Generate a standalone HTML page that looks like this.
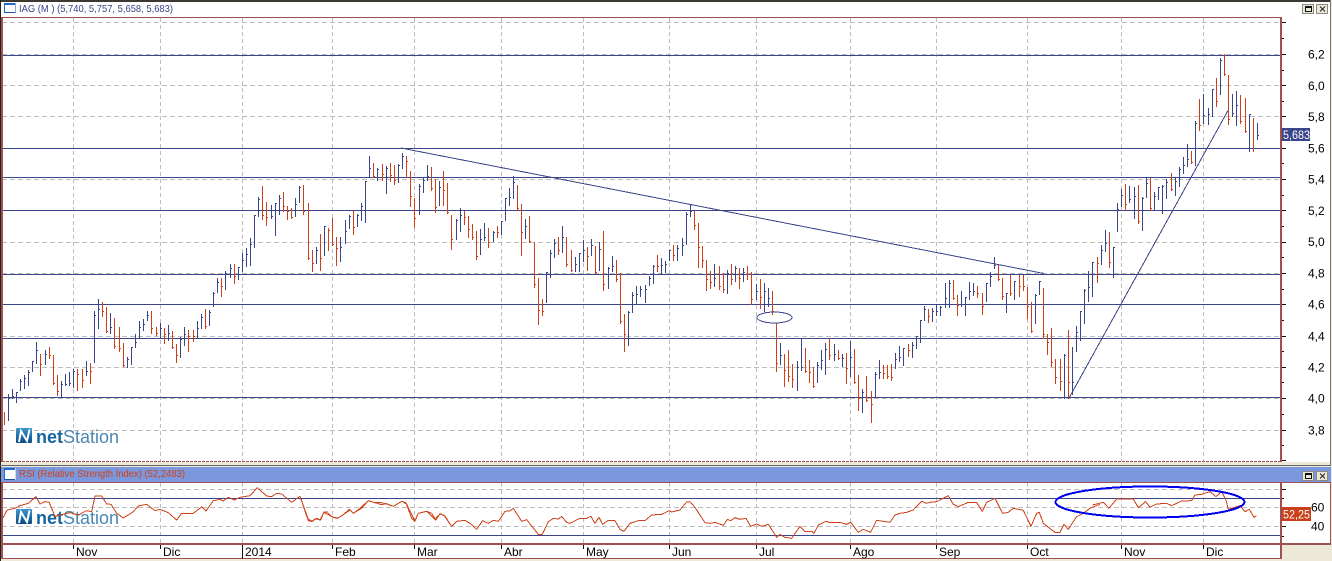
<!DOCTYPE html>
<html><head><meta charset="utf-8"><title>IAG</title>
<style>
html,body{margin:0;padding:0;background:#ECE9D8;width:1332px;height:561px;overflow:hidden}
svg{display:block;position:absolute;left:0;top:0}
text{font-family:"Liberation Sans",Arial,sans-serif}
.a{font-size:12px;fill:#000}
</style></head><body>
<svg width="1332" height="561" viewBox="0 0 1332 561" xmlns="http://www.w3.org/2000/svg">
<defs><linearGradient id="g" x1="0" y1="0" x2="0" y2="1"><stop offset="0" stop-color="#3E97CE"/><stop offset="1" stop-color="#0B4A84"/></linearGradient></defs>
<rect width="1332" height="561" fill="#ECE9D8"/>
<rect x="0" y="0" width="1331" height="2" fill="#3a3a32"/>
<rect x="0" y="2" width="1331" height="15" fill="#fff"/>
<rect x="2" y="17" width="1328" height="445" fill="#fff"/>
<rect x="2" y="482" width="1328" height="62" fill="#fff"/>
<rect x="2" y="545" width="1279" height="14" fill="#fff"/>
<rect x="1330" y="0" width="1" height="466" fill="#777"/>
<!-- rsi band -->
<rect x="0" y="467" width="1331" height="15" fill="#7B97DD"/>
<g shape-rendering="crispEdges">
<!-- grid -->
<path fill="none" stroke="#BDBDBD" stroke-dasharray="5 3" d="M2 22.5H1280M2 54.5H1280M2 85.5H1280M2 116.5H1280M2 148.5H1280M2 179.5H1280M2 210.5H1280M2 242.5H1280M2 273.5H1280M2 304.5H1280M2 336.5H1280M2 367.5H1280M2 398.5H1280M2 430.5H1280M2 489.5H1280M2 507.5H1280M2 526.5H1280"/>
<path fill="none" stroke="#BDBDBD" stroke-dasharray="4 3" d="M73.5 18V461M160.5 18V461M242.5 18V461M332.5 18V461M414.5 18V461M501.5 18V461M583.5 18V461M669.5 18V461M756.5 18V461M850.5 18V461M936.5 18V461M1027.5 18V461M1121.5 18V461M1203.5 18V461M73.5 483V543M160.5 483V543M242.5 483V543M332.5 483V543M414.5 483V543M501.5 483V543M583.5 483V543M669.5 483V543M756.5 483V543M850.5 483V543M936.5 483V543M1027.5 483V543M1121.5 483V543M1203.5 483V543"/>
<!-- horizontals -->
<path fill="none" stroke="#3A4488" d="M2 55.5H1280M2 148.5H1280M2 177.5H1280M2 210.5H1280M2 274.5H1280M2 304.5H1280M2 338.5H1280M2 397.5H1280M2 498.5H1280M2 535.5H1280"/>
</g>
<!-- logos -->
<g>
<rect x="16" y="428" width="16" height="15" rx="1" fill="url(#g)"/><path d="M19 442L21 431L27 441L29.5 429.500" fill="none" stroke="#fff" stroke-width="2"/>
<text x="36" y="443" font-size="18.500" fill="#1565A0" textLength="83" lengthAdjust="spacingAndGlyphs"><tspan font-weight="bold">net</tspan><tspan fill="#4A88B2">Station</tspan></text>
<rect x="16" y="509" width="16" height="15" rx="1" fill="url(#g)"/><path d="M19 523L21 512L27 522L29.5 510.500" fill="none" stroke="#fff" stroke-width="2"/>
<text x="36" y="524" font-size="18.500" fill="#1565A0" textLength="83" lengthAdjust="spacingAndGlyphs"><tspan font-weight="bold">net</tspan><tspan fill="#4A88B2">Station</tspan></text>
</g>
<!-- bars -->
<g fill="none" stroke-width="1" shape-rendering="crispEdges">
<path stroke="#3A4488" d="M8.500 394V421M9 398.500h1M12.500 389V399M13 396.500h1M16.500 392V403M17 392.500h1M20.500 379V391M21 381.500h1M24.500 375V389M25 378.500h1M28.500 370V386M29 372.500h1M32.500 361V372M33 361.500h1M36.500 342V364M37 350.500h1M45.500 350V365M46 354.500h1M61.500 381V397M62 384.500h1M65.500 374V386M66 384.500h1M69.500 372V386M70 383.500h1M73.500 369V388M74 371.500h1M86.500 361V376M87 371.500h1M94.500 311V363M95 315.500h1M98.500 299V329M99 309.500h1M110.500 313V334M111 327.500h1M127.500 357V368M128 359.500h1M131.500 347V365M132 347.500h1M135.500 334V348M136 342.500h1M139.500 321V339M140 327.500h1M143.500 319V331M144 324.500h1M147.500 311V321M148 315.500h1M160.500 323V339M161 328.500h1M168.500 325V341M169 333.500h1M180.500 337V358M181 339.500h1M184.500 327V346M185 334.500h1M197.500 321V339M198 328.500h1M201.500 314V329M202 317.500h1M209.500 310V326M210 312.500h1M213.500 292V307M214 293.500h1M217.500 278V293M218 282.500h1M225.500 271V290M226 273.500h1M230.500 264V278M231 268.500h1M238.500 267V280M239 267.500h1M242.500 253V272M243 260.500h1M246.500 248V267M247 254.500h1M250.500 238V266M251 244.500h1M254.500 215V248M255 215.500h1M258.500 197V217M259 199.500h1M271.500 205V219M272 216.500h1M275.500 203V236M276 203.500h1M279.500 195V215M280 198.500h1M295.500 198V217M296 204.500h1M299.500 186V203M300 187.500h1M316.500 247V264M317 250.500h1M324.500 226V256M325 226.500h1M340.500 237V262M341 247.500h1M345.500 220V244M346 231.500h1M349.500 215V229M350 216.500h1M357.500 214V227M358 215.500h1M361.500 203V221M362 206.500h1M365.500 181V223M366 181.500h1M369.500 156V178M370 168.500h1M377.500 168V181M378 169.500h1M386.500 166V194M387 168.500h1M398.500 164V183M399 165.500h1M402.500 153V169M403 156.500h1M419.500 184V215M420 186.500h1M423.500 178V193M424 180.500h1M427.500 165V181M428 176.500h1M439.500 181V206M440 187.500h1M456.500 219V240M457 220.500h1M460.500 208V232M461 215.500h1M480.500 229V255M481 239.500h1M484.500 223V241M485 237.500h1M493.500 231V242M494 232.500h1M501.500 221V235M502 221.500h1M505.500 198V221M506 198.500h1M509.500 188V206M510 197.500h1M513.500 176V199M514 182.500h1M525.500 219V239M526 226.500h1M546.500 272V303M547 272.500h1M550.500 250V278M551 253.500h1M554.500 239V258M555 243.500h1M562.500 226V253M563 237.500h1M575.500 257V272M576 264.500h1M579.500 253V272M580 253.500h1M583.500 240V262M584 250.500h1M591.500 239V256M592 245.500h1M599.500 242V271M600 249.500h1M608.500 267V289M609 268.500h1M612.500 256V272M613 266.500h1M628.500 311V346M629 312.500h1M632.500 292V313M633 295.500h1M636.500 286V305M637 294.500h1M640.500 286V297M641 289.500h1M645.500 285V303M646 289.500h1M649.500 276V286M650 278.500h1M653.500 265V284M654 266.500h1M661.500 258V275M662 265.500h1M665.500 261V273M666 264.500h1M669.500 250V261M670 250.500h1M677.500 245V261M678 248.500h1M682.500 238V256M683 245.500h1M686.500 212V245M687 214.500h1M690.500 204V217M691 211.500h1M714.500 264V287M715 278.500h1M727.500 270V294M728 273.500h1M735.500 266V282M736 268.500h1M743.500 268V282M744 272.500h1M756.500 284V300M757 291.500h1M764.500 283V312M765 291.500h1M768.500 288V307M769 298.500h1M780.500 343V365M781 355.500h1M797.500 361V391M798 367.500h1M801.500 338V371M802 367.500h1M817.500 362V383M818 365.500h1M821.500 350V370M822 360.500h1M825.500 343V375M826 349.500h1M834.500 344V361M835 354.500h1M842.500 354V367M843 358.500h1M850.500 341V377M851 357.500h1M862.500 389V413M863 392.500h1M875.500 372V398M876 374.500h1M879.500 360V379M880 372.500h1M895.500 353V369M896 359.500h1M899.500 346V362M900 357.500h1M903.500 348V366M904 348.500h1M912.500 342V358M913 345.500h1M916.500 336V349M917 336.500h1M920.500 320V343M921 320.500h1M924.500 306V321M925 309.500h1M932.500 308V322M933 311.500h1M936.500 305V316M937 311.500h1M940.500 306V316M941 307.500h1M945.500 283V308M946 298.500h1M949.500 280V308M950 283.500h1M961.500 291V307M962 304.500h1M965.500 297V316M966 297.500h1M969.500 282V300M970 291.500h1M973.500 283V296M974 291.500h1M986.500 283V302M987 283.500h1M990.500 272V287M991 276.500h1M994.500 257V269M995 265.500h1M1006.500 293V313M1007 293.500h1M1014.500 281V300M1015 281.500h1M1035.500 294V324M1036 295.500h1M1039.500 281V295M1040 281.500h1M1064.500 354V399M1065 355.500h1M1072.500 347V395M1073 382.500h1M1076.500 326V352M1077 332.500h1M1080.500 311V341M1081 311.500h1M1084.500 289V324M1085 290.500h1M1088.500 271V302M1089 287.500h1M1092.500 262V297M1093 262.500h1M1101.500 245V265M1102 250.500h1M1105.500 230V252M1106 243.500h1M1113.500 247V278M1114 247.500h1M1117.500 203V232M1118 209.500h1M1121.500 189V207M1122 195.500h1M1129.500 186V203M1130 199.500h1M1134.500 187V219M1135 196.500h1M1142.500 197V231M1143 198.500h1M1146.500 177V198M1147 183.500h1M1154.500 192V211M1155 196.500h1M1158.500 187V200M1159 187.500h1M1162.500 185V214M1163 186.500h1M1166.500 179V199M1167 182.500h1M1175.500 177V196M1176 181.500h1M1179.500 167V187M1180 169.500h1M1183.500 157V174M1184 165.500h1M1187.500 144V167M1188 159.500h1M1195.500 121V166M1196 123.500h1M1203.500 94V124M1204 115.500h1M1208.500 108V125M1209 114.500h1M1212.500 89V117M1213 89.500h1M1220.500 58V95M1221 60.500h1M1232.500 94V117M1233 113.500h1M1236.500 91V126M1237 105.500h1M1249.500 114V152M1250 114.500h1M1257.500 123V140M1258 135.500h1"/>
<path stroke="#D04018" d="M4.500 412V425M40.500 354V376M41 364.500h1M49.500 347V359M50 355.500h1M53.500 355V385M54 383.500h1M57.500 375V396M58 391.500h1M77.500 369V391M78 374.500h1M82.500 369V388M83 380.500h1M90.500 363V384M91 371.500h1M102.500 302V317M103 311.500h1M106.500 307V333M107 331.500h1M114.500 318V349M115 346.500h1M119.500 327V352M120 348.500h1M123.500 343V367M124 365.500h1M151.500 311V334M152 328.500h1M156.500 327V336M157 333.500h1M164.500 328V344M165 334.500h1M172.500 331V349M173 347.500h1M176.500 344V363M177 355.500h1M188.500 330V352M189 336.500h1M193.500 330V342M194 336.500h1M205.500 309V329M206 326.500h1M221.500 278V297M222 286.500h1M234.500 264V284M235 276.500h1M262.500 186V220M263 215.500h1M266.500 202V226M267 217.500h1M283.500 192V212M284 206.500h1M287.500 206V220M288 211.500h1M291.500 208V219M292 217.500h1M303.500 185V215M304 211.500h1M308.500 203V260M309 258.500h1M312.500 250V272M313 263.500h1M320.500 234V271M321 258.500h1M328.500 228V251M329 230.500h1M332.500 218V246M333 244.500h1M336.500 237V266M337 248.500h1M353.500 211V235M354 227.500h1M373.500 163V178M374 176.500h1M382.500 164V181M383 174.500h1M390.500 163V182M391 175.500h1M394.500 165V185M395 180.500h1M406.500 156V178M407 161.500h1M410.500 171V207M411 196.500h1M414.500 198V228M415 218.500h1M431.500 167V191M432 188.500h1M435.500 179V213M436 207.500h1M443.500 171V206M444 190.500h1M447.500 183V214M448 212.500h1M451.500 215V250M452 239.500h1M464.500 211V225M465 217.500h1M468.500 216V238M469 229.500h1M472.500 224V240M473 237.500h1M476.500 231V260M477 256.500h1M488.500 228V248M489 242.500h1M497.500 226V238M498 232.500h1M517.500 185V211M518 208.500h1M521.500 204V256M522 232.500h1M529.500 216V243M530 241.500h1M534.500 242V288M535 284.500h1M538.500 278V325M539 310.500h1M542.500 299V316M543 311.500h1M558.500 237V255M559 250.500h1M566.500 237V267M567 264.500h1M571.500 250V272M572 270.500h1M587.500 247V271M588 256.500h1M595.500 246V274M596 272.500h1M603.500 231V291M604 284.500h1M616.500 260V282M617 279.500h1M620.500 273V324M621 321.500h1M624.500 314V352M625 334.500h1M657.500 255V272M658 266.500h1M673.500 245V261M674 255.500h1M694.500 211V230M695 225.500h1M698.500 223V268M699 247.500h1M702.500 246V268M703 260.500h1M706.500 260V291M707 279.500h1M710.500 271V289M711 282.500h1M719.500 266V290M720 286.500h1M723.500 273V293M724 289.500h1M731.500 264V285M732 279.500h1M739.500 268V289M740 278.500h1M747.500 266V280M748 274.500h1M751.500 272V305M752 299.500h1M760.500 279V309M761 297.500h1M772.500 291V315M773 311.500h1M776.500 323V372M777 363.500h1M784.500 354V387M785 370.500h1M788.500 350V382M789 376.500h1M792.500 364V388M793 379.500h1M805.500 348V373M806 371.500h1M809.500 360V383M810 372.500h1M813.500 367V388M814 386.500h1M829.500 339V360M830 355.500h1M838.500 350V360M839 358.500h1M846.500 353V384M847 368.500h1M854.500 349V384M855 382.500h1M858.500 375V411M859 398.500h1M866.500 376V402M867 400.500h1M871.500 391V423M872 404.500h1M883.500 365V379M884 373.500h1M887.500 365V379M888 376.500h1M891.500 364V381M892 377.500h1M908.500 344V357M909 350.500h1M928.500 309V323M929 316.500h1M953.500 280V300M954 298.500h1M957.500 295V316M958 305.500h1M977.500 286V298M978 293.500h1M982.500 293V315M983 306.500h1M998.500 265V281M999 279.500h1M1002.500 278V300M1003 296.500h1M1010.500 275V296M1011 293.500h1M1019.500 275V297M1020 286.500h1M1023.500 275V291M1024 286.500h1M1027.500 287V319M1028 306.500h1M1031.500 302V333M1032 331.500h1M1043.500 288V339M1044 334.500h1M1047.500 334V355M1048 342.500h1M1051.500 328V367M1052 362.500h1M1055.500 359V384M1056 377.500h1M1060.500 359V391M1061 381.500h1M1068.500 330V399M1069 382.500h1M1097.500 257V283M1098 263.500h1M1109.500 232V268M1110 262.500h1M1125.500 184V211M1126 204.500h1M1138.500 185V224M1139 221.500h1M1150.500 178V211M1151 208.500h1M1171.500 173V191M1172 189.500h1M1191.500 151V164M1192 162.500h1M1199.500 99V131M1200 125.500h1M1216.500 78V107M1217 101.500h1M1224.500 54V76M1225 74.500h1M1228.500 75V125M1229 119.500h1M1240.500 95V124M1241 121.500h1M1245.500 98V133M1246 131.500h1M1253.500 118V152"/>
</g>
<!-- trend lines -->
<g fill="none" stroke="#3A4488" stroke-width="1" shape-rendering="crispEdges">
<path d="M401 148L1044 273.500"/>
<path d="M1068.500 399L1228 110.500"/>
<ellipse cx="774.500" cy="317.500" rx="17.500" ry="5.500"/>
</g>
<!-- RSI line -->
<g fill="none" stroke="#CF4218" stroke-width="1" stroke-linejoin="round" shape-rendering="crispEdges">
<path transform="translate(0 380) scale(.3333)" style="vector-effect:non-scaling-stroke" d="M9 413L22 390L45 385L60 377L85 370L108 350L120 372L135 365L148 367L165 410L180 405L210 398L235 405L260 392L275 395L285 348L305 348L320 372L333 373L350 400L370 414L385 405L400 395L415 378L440 373L465 392L480 388L505 398L530 420L545 400L565 400L580 400L600 385L605 380L618 393L640 362L660 358L670 363L685 352L703 360L720 352L750 347L772 323L800 348L815 350L830 340L845 342L875 367L900 349L925 418L937 424L950 415L962 420L972 397L1000 412L1015 414L1050 390L1060 400L1085 385L1105 362L1125 368L1140 367L1160 372L1180 379L1205 364L1220 372L1245 424L1255 400L1280 394L1305 418L1320 402L1335 408L1350 432"/>
<path transform="translate(300 480) scale(.3333)" style="vector-effect:non-scaling-stroke" d="M3 55L12 85L25 122L35 124L47 116L60 120L72 96L82 96L95 110L110 115L125 108L148 88L160 100L180 85L205 62L225 68L245 74L260 71L280 79L305 64L318 68L335 115L344 124L355 100L380 94L395 100L407 120L420 101L432 106L455 139L470 124L495 121L510 130L530 148L548 122L565 130L580 121L595 124L615 94L628 93L640 85L665 124L680 119L715 163L727 163L745 125L760 115L775 117L785 109L800 127L810 130L840 115L860 115L873 109L885 130L897 112L908 133L925 121L945 122L960 148L972 154L990 130L1015 122L1035 122L1055 105L1085 103L1108 92L1115 96L1140 90L1160 66L1170 65L1185 82L1200 105"/>
<path transform="translate(700 480) scale(.3333)" style="vector-effect:non-scaling-stroke" d="M0 105L15 128L30 130L45 127L70 136L82 118L92 122L105 113L120 118L138 115L152 139L170 132L185 139L205 133L230 172L240 163L255 172L275 175L300 139L315 154L335 154L342 160L355 135L378 124L390 128L420 127L440 133L452 127L475 157L490 148L512 157L530 121L570 127L585 105L600 100L620 97L640 90L665 64L680 70L690 67L710 65L745 47L760 73L775 80L805 67L830 67L847 94L860 67L885 55L908 100L925 97L940 85L970 91L993 139L1010 100L1018 97L1030 130L1065 157L1080 157L1092 133L1105 148L1130 110L1150 100L1170 85L1200 73"/>
<path transform="translate(1000 440) scale(.3333)" style="vector-effect:non-scaling-stroke" d="M277 195L310 187L327 205L350 177L400 177L415 203L437 185L450 202L470 192L500 190L515 197L545 183L575 182L585 165L605 163L630 155L648 170L665 155L678 180L685 208L720 197L735 215L748 208L762 232L770 227"/>
</g>
<ellipse cx="1150" cy="502" rx="94.500" ry="15.500" fill="none" stroke="#0000F0" stroke-width="2" shape-rendering="crispEdges"/>
<!-- borders -->
<g shape-rendering="crispEdges">
<rect x="0" y="0" width="1" height="561" fill="#222"/>
<rect x="1" y="17" width="2" height="445" fill="#A05050"/>
<rect x="2" y="17" width="1279" height="1" fill="#A05050"/>
<rect x="1280" y="17" width="2" height="445" fill="#A05050"/>
<path d="M2 461.500H1282" stroke="#A05050" stroke-dasharray="3 1" fill="none"/>
<rect x="0" y="465" width="1331" height="1" fill="#666"/>
<rect x="1" y="482" width="1330" height="1" fill="#A05050"/>
<rect x="1" y="482" width="2" height="77" fill="#A05050"/>
<rect x="1280" y="482" width="2" height="77" fill="#A05050"/>
<rect x="1330" y="482" width="1" height="62" fill="#A05050"/>
<rect x="1" y="543" width="1330" height="2" fill="#A05050"/>
<rect x="1" y="558" width="1281" height="1" fill="#A05050"/>
<!-- axis ticks -->
<path stroke="#111" fill="none" d="M1282 22.500h4M1282 54.500h4M1282 85.500h4M1282 116.500h4M1282 148.500h4M1282 179.500h4M1282 210.500h4M1282 242.500h4M1282 273.500h4M1282 304.500h4M1282 336.500h4M1282 367.500h4M1282 398.500h4M1282 430.500h4M1282 460.500h4M1282 38.500h2M1282 70.500h2M1282 101.500h2M1282 132.500h2M1282 163.500h2M1282 195.500h2M1282 226.500h2M1282 257.500h2M1282 289.500h2M1282 320.500h2M1282 351.500h2M1282 382.500h2M1282 414.500h2M1282 445.500h2M1282 489.500h4M1282 498.500h2M1282 526.500h4M1282 536.500h2M73.500 545v4M160.500 545v4M242.500 545v14M332.500 545v4M414.500 545v4M501.500 545v4M583.500 545v4M669.500 545v4M756.500 545v4M850.500 545v4M936.500 545v4M1027.500 545v4M1121.500 545v4M1203.500 545v4"/>
<!-- title icons -->
<rect x="4" y="3" width="12" height="11" fill="#fff" stroke="none"/>
<rect x="4" y="3" width="12" height="2" fill="#1E6BC8"/><rect x="4" y="12" width="12" height="1" fill="#1E50A0"/><rect x="4" y="3" width="1" height="10" fill="#1E6BC8"/><rect x="15" y="3" width="1" height="10" fill="#8DA8CC"/>
<rect x="4" y="468" width="12" height="12" fill="#fff"/>
<rect x="4" y="468" width="12" height="2" fill="#1E6BC8"/><rect x="4" y="479" width="12" height="1" fill="#1E50A0"/><rect x="4" y="468" width="1" height="12" fill="#1E6BC8"/><rect x="15" y="468" width="1" height="12" fill="#C8D4EC"/>
<!-- window buttons -->
<g>
<rect x="1302.500" y="4.500" width="11" height="9" fill="#ECE9D8" stroke="#8a8a80"/><rect x="1305.500" y="6.500" width="6" height="5" fill="none" stroke="#111"/><rect x="1305" y="6" width="7" height="2" fill="#111"/>
<rect x="1316.500" y="4.500" width="11" height="9" fill="#ECE9D8" stroke="#8a8a80"/>
<rect x="1302.500" y="471.500" width="11" height="9" fill="#ECE9D8" stroke="#8a8a80"/><rect x="1305.500" y="473.500" width="6" height="5" fill="none" stroke="#111"/><rect x="1305" y="473" width="7" height="2" fill="#111"/>
<rect x="1316.500" y="471.500" width="11" height="9" fill="#ECE9D8" stroke="#8a8a80"/>
</g>
</g>
<path d="M1320 6.500l5 5m0-5l-5 5M1320 473.500l5 5m0-5l-5 5" stroke="#222" fill="none"/>
<!-- badges -->
<rect x="1282" y="128" width="28" height="13" fill="#3A4488"/>
<rect x="1282" y="507" width="29" height="14" fill="#C8401A"/>
<!-- texts -->
<text x="19" y="12" font-size="10.500" fill="#3A4488" textLength="154" lengthAdjust="spacingAndGlyphs">IAG (M ) (5,740, 5,757, 5,658, 5,683)</text>
<text x="19" y="477" font-size="10.500" fill="#CF4218" textLength="166" lengthAdjust="spacingAndGlyphs">RSI (Relative Strength Index) (52,2483)</text>
<g class="a">
<text class="a" x="1308" y="58.500">6,2</text>
<text class="a" x="1308" y="90">6,0</text>
<text class="a" x="1308" y="121">5,8</text>
<text class="a" x="1308" y="152.500">5,6</text>
<text class="a" x="1308" y="183.500">5,4</text>
<text class="a" x="1308" y="215">5,2</text>
<text class="a" x="1308" y="246">5,0</text>
<text class="a" x="1308" y="277.500">4,8</text>
<text class="a" x="1308" y="308.500">4,6</text>
<text class="a" x="1308" y="340.500">4,4</text>
<text class="a" x="1308" y="371.500">4,2</text>
<text class="a" x="1308" y="402.500">4,0</text>
<text class="a" x="1308" y="434.500">3,8</text>
<text class="a" x="1311" y="511.500">60</text>
<text class="a" x="1311" y="530.500">40</text>
<text class="a" x="76" y="556">Nov</text>
<text class="a" x="163" y="556">Dic</text>
<text class="a" x="245" y="556">2014</text>
<text class="a" x="335" y="556">Feb</text>
<text class="a" x="417" y="556">Mar</text>
<text class="a" x="504" y="556">Abr</text>
<text class="a" x="586" y="556">May</text>
<text class="a" x="672" y="556">Jun</text>
<text class="a" x="759" y="556">Jul</text>
<text class="a" x="853" y="556">Ago</text>
<text class="a" x="939" y="556">Sep</text>
<text class="a" x="1030" y="556">Oct</text>
<text class="a" x="1124" y="556">Nov</text>
<text class="a" x="1206" y="556">Dic</text>
</g>
<text x="1283" y="139" font-size="12" fill="#fff" textLength="27" lengthAdjust="spacingAndGlyphs">5,683</text>
<text x="1283" y="518.500" font-size="12" fill="#fff" textLength="27" lengthAdjust="spacingAndGlyphs">52,25</text>
</svg>
</body></html>
